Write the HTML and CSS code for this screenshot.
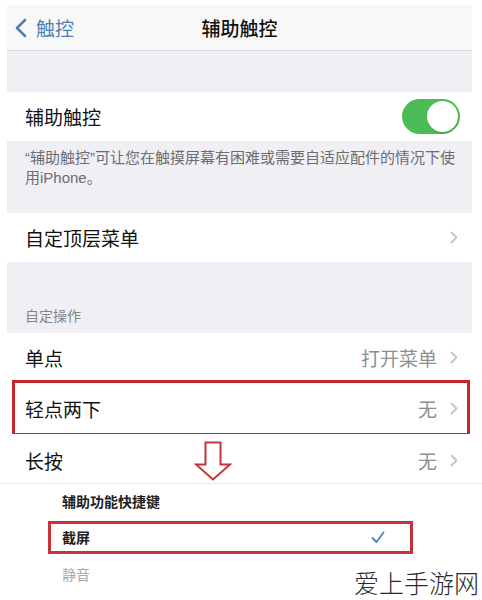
FILE: index.html
```html
<!DOCTYPE html>
<html lang="zh-CN">
<head>
<meta charset="utf-8">
<link rel="stylesheet" href="styles.css">
</head>
<body>
<div class="screen">
  <header class="nav">
    <div class="back">
      <svg class="back-chev" width="12" height="20" viewBox="0 0 12 20"><path d="M10 2 L2 10 L10 18" fill="none" stroke="currentColor" stroke-width="2.6" stroke-linecap="round" stroke-linejoin="round"/></svg>
      <span>触控</span>
    </div>
    <div class="title">辅助触控</div>
    <div></div>
  </header>
  <div class="gap-top"></div>
  <div class="row">
    <span class="label">辅助触控</span>
    <span class="toggle"><span class="knob"></span></span>
  </div>
  <div class="footer">“辅助触控”可让您在触摸屏幕有困难或需要自适应配件的情况下使用iPhone。</div>
  <div class="row">
    <span class="label">自定顶层菜单</span>
    <span class="detail"><svg class="chev" width="8" height="13" viewBox="0 0 8 13"><path d="M1.5 1.5 L6.5 6.5 L1.5 11.5" fill="none" stroke="currentColor" stroke-width="1.8" stroke-linecap="round" stroke-linejoin="round"/></svg></span>
  </div>
  <div class="section-head">自定操作</div>
  <div class="row">
    <span class="label">单点</span>
    <span class="detail"><span class="value">打开菜单</span><svg class="chev" width="8" height="13" viewBox="0 0 8 13"><path d="M1.5 1.5 L6.5 6.5 L1.5 11.5" fill="none" stroke="currentColor" stroke-width="1.8" stroke-linecap="round" stroke-linejoin="round"/></svg></span>
  </div>
  <div class="row marked">
    <span class="label">轻点两下</span>
    <span class="detail"><span class="value">无</span><svg class="chev" width="8" height="13" viewBox="0 0 8 13"><path d="M1.5 1.5 L6.5 6.5 L1.5 11.5" fill="none" stroke="currentColor" stroke-width="1.8" stroke-linecap="round" stroke-linejoin="round"/></svg></span>
  </div>
  <div class="row last">
    <span class="label">长按</span>
    <span class="detail"><span class="value">无</span><svg class="chev" width="8" height="13" viewBox="0 0 8 13"><path d="M1.5 1.5 L6.5 6.5 L1.5 11.5" fill="none" stroke="currentColor" stroke-width="1.8" stroke-linecap="round" stroke-linejoin="round"/></svg></span>
    <svg class="down-arrow" width="38" height="40" viewBox="0 0 38 40"><path d="M11.5 1.5 H26.5 V23.5 H36 L19 38.5 L2 23.5 H11.5 Z" fill="#fff" stroke="#c4343a" stroke-width="2" stroke-linejoin="miter"/></svg>
  </div>
</div>
<div class="sheet">
  <div class="sheet-head">辅助功能快捷键</div>
  <div class="sheet-item selected">
    <span>截屏</span>
    <svg class="check" width="14" height="13" viewBox="0 0 14 13"><path d="M1.5 7 L5.5 11 L12.5 1.5" fill="none" stroke="currentColor" stroke-width="1.8" stroke-linecap="round" stroke-linejoin="round"/></svg>
  </div>
  <div class="sheet-item muted">静音</div>
  <div class="watermark">爱上手游网</div>
</div>
</body>
</html>
```

FILE: styles.css
```css
* { box-sizing: border-box; }
html, body { margin: 0; padding: 0; }
body {
  width: 482px;
  height: 600px;
  overflow: hidden;
  background: #fff;
  font-family: "Liberation Sans", "Noto Sans CJK SC", sans-serif;
  color: #111;
}
.screen {
  margin: 5px 10px 0 7px;
  width: 465px;
  height: 478px;
  overflow: hidden;
  background: #efeff4;
}
.nav {
  height: 46px;
  background: #f8f8f9;
  border-bottom: 1px solid #dcdce0;
  display: grid;
  grid-template-columns: 1fr auto 1fr;
  align-items: center;
}
.back {
  display: flex;
  align-items: center;
  gap: 9px;
  padding-left: 8px;
  color: #4c80b3;
  font-size: 19px;
}
.back-chev { display: block; }
.title {
  font-size: 19px;
  font-weight: 500;
  color: #111;
}
.gap-top { height: 41px; }
.row {
  position: relative;
  height: 49px;
  background: #fff;
  display: flex;
  align-items: center;
  justify-content: space-between;
  padding: 0 12px 0 18px;
  font-size: 19px;
}
.row + .row { height: 52px; }
.label { color: #111; }
.detail {
  display: flex;
  align-items: center;
  gap: 13px;
  padding-right: 2px;
  color: #c4c4c8;
}
.value { color: #8e8e93; }
.chev { display: block; }
.toggle {
  width: 58px;
  height: 35px;
  border-radius: 18px;
  background: #4cbd55;
  display: flex;
  align-items: center;
  justify-content: flex-end;
  padding: 2px;
}
.knob {
  width: 31px;
  height: 31px;
  border-radius: 50%;
  background: #fff;
  box-shadow: 0 1px 2px rgba(0,0,0,0.2);
}
.footer {
  height: 72px;
  padding: 7px 12px 0 18px;
  font-size: 15px;
  line-height: 20px;
  color: #6d6d72;
}
.section-head {
  height: 71px;
  display: flex;
  align-items: flex-end;
  padding: 0 0 7px 18px;
  font-size: 14px;
  line-height: 20px;
  color: #858589;
}
.marked::after {
  content: "";
  position: absolute;
  left: 5px;
  right: 2px;
  top: -2px;
  bottom: -2px;
  border: 3px solid #c8262d;
  pointer-events: none;
}
.down-arrow {
  position: absolute;
  left: 187px;
  top: 7px;
}
.sheet {
  position: relative;
  height: 117px;
  border-top: 1px solid #ececee;
  padding: 8px 0 0 48px;
  background: #fff;
}
.sheet-head {
  padding-left: 14px;
  font-size: 14px;
  line-height: 20px;
  font-weight: 700;
  color: #222;
}
.sheet-item {
  font-size: 14px;
  line-height: 20px;
}
.selected {
  margin-top: 9px;
  width: 365px;
  height: 33px;
  border: 3px solid #c8323a;
  display: flex;
  align-items: center;
  justify-content: space-between;
  padding: 0 25px 0 11px;
  font-weight: 700;
  color: #222;
}
.check { display: block; color: #4c80b3; }
.muted {
  margin-top: 11px;
  padding-left: 14px;
  color: #a9a9ad;
}
.watermark {
  position: absolute;
  right: 3px;
  bottom: 3px;
  font-family: "Noto Sans CJK SC", sans-serif;
  font-size: 25px;
  font-weight: 300;
  line-height: 30px;
  color: #2a2a2a;
}
```
